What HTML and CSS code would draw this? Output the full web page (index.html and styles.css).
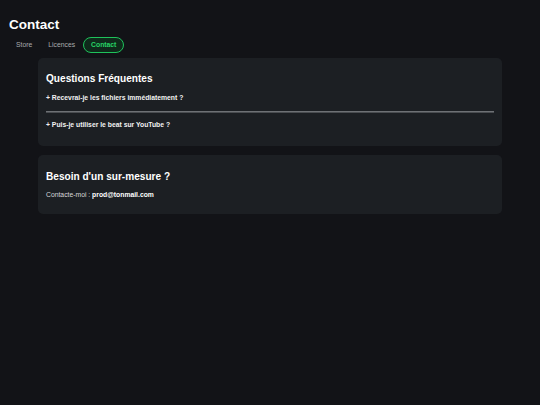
FILE: index.html
```html
<!DOCTYPE html>
<html lang="fr">
<head>
<meta charset="utf-8">
<title>Contact</title>
<link rel="stylesheet" href="styles.css">
</head>
<body>
  <header class="page-header">
    <h1 class="page-title">Contact</h1>
    <nav class="tabs">
      <a class="tab" href="#">Store</a>
      <a class="tab" href="#">Licences</a>
      <a class="tab tab-active" href="#">Contact</a>
    </nav>
  </header>
  <main class="content">
    <section class="card card-faq">
      <h2 class="card-title">Questions Fréquentes</h2>
      <p class="faq-q">+ Recevrai-je les fichiers immédiatement ?</p>
      <hr class="divider">
      <p class="faq-q">+ Puis-je utiliser le beat sur YouTube ?</p>
    </section>
    <section class="card card-contact">
      <h2 class="card-title">Besoin d'un sur-mesure ?</h2>
      <p class="contact-line">Contacte-moi : <strong class="email">prod@tonmail.com</strong></p>
    </section>
  </main>
</body>
</html>
```
FILE: styles.css
```css
html, body {
  margin: 0;
  background: #121317;
}

body {
  padding: 0 8px 8px;
  font-family: "Liberation Sans", Arial, sans-serif;
  color: #ffffff;
}

.page-title {
  margin: 17px 0 0;
  padding-left: 1px;
  font-size: 13.5px;
  line-height: 15px;
  font-weight: 700;
}

.tabs {
  display: flex;
  margin-top: 5px;
}

.tab {
  display: block;
  padding: 3px 7px;
  border: 1px solid transparent;
  border-radius: 999px;
  font-size: 6.8px;
  line-height: 8px;
  color: #a9abae;
  text-decoration: none;
}

.tab-active {
  border-color: #1fc25b;
  background: #0f2a1b;
  color: #27d466;
  font-weight: 700;
}

.content {
  max-width: 464px;
  margin: 5px auto 0;
  display: flex;
  flex-direction: column;
  gap: 9px;
}

.card {
  background: #1c1f23;
  border-radius: 5px;
  padding: 8px 8px 17px;
}

.card-title {
  margin: 7px 0 9px;
  font-size: 10.1px;
  line-height: 12px;
  font-weight: 700;
  color: #ffffff;
}

.card-contact {
  padding-bottom: 15px;
}

.card-contact .card-title {
  margin: 8px 0 8px;
}

.faq-q {
  margin: 0;
  font-size: 6.8px;
  line-height: 8px;
  font-weight: 700;
  color: #f2f2f2;
}

.divider {
  margin: 9px 0 8px;
  height: 0;
  border: 0;
  border-top: 1px solid #6e7175;
  border-bottom: 1px solid #4a4d51;
}

.contact-line {
  margin: 0;
  font-size: 6.8px;
  line-height: 8px;
  color: #d6d7d9;
}

.email {
  color: #ffffff;
  font-weight: 700;
}
```
